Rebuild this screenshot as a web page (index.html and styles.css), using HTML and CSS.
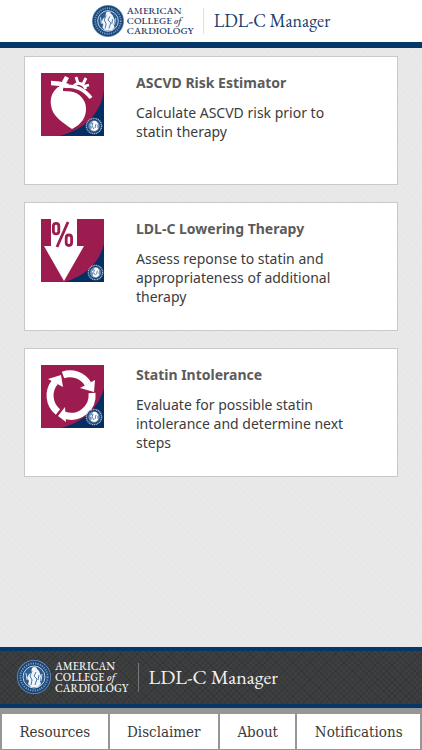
FILE: index.html
```
<!DOCTYPE html>
<html lang="en">
<head>
<meta charset="utf-8">
<meta name="viewport" content="width=device-width, initial-scale=1">
<title>LDL-C Manager</title>
<link rel="stylesheet" href="styles.css">
</head>
<body>
<svg class="defs" aria-hidden="true">
  <symbol id="seal" viewBox="0 0 34 34">
    <circle cx="17" cy="17" r="17" fill="#6f93ba"/>
    <circle cx="17" cy="17" r="16.2" fill="#164579"/>
    <circle cx="17" cy="17" r="13.6" fill="none" stroke="#7798bb" stroke-width="2" stroke-dasharray="1.3 1.1"/>
    <circle cx="17" cy="17" r="11" fill="#2d5c92" stroke="#d8e4f0" stroke-width=".9"/>
    <path d="M15 8c2-2 5-1 5 1l2 2 2 5-1 5 1 3-3 3h-7l-3-3 1-3-2-3 2-4 2-1z" fill="#eef4f9"/>
    <path d="M15 11l-2 5 2 4-1 5M19 12l-2 4 3 3-2 6M22 15l-1 5" fill="none" stroke="#4a76a8" stroke-width="1"/>
    <path d="M9 13l1 7M25 14l-1 7" stroke="#d0dfed" stroke-width="1"/>
  </symbol>
  <symbol id="badge" viewBox="0 0 18 18">
    <circle cx="9" cy="9" r="7.6" fill="#173f70" stroke="#9eb5cf" stroke-width="1.4" stroke-dasharray="1.2 .6"/>
    <circle cx="9" cy="9" r="5.7" fill="#7697bb"/>
    <path d="M8 4l3 0 2 3-1 2 1 3-3 2-4-1 1-3-2-2 2-1z" fill="#fff"/>
    <path d="M8 6l-1 3 2 3M11 7l-1 4" fill="none" stroke="#567fab"/>
  </symbol>
</svg>

<header class="header">
  <div class="brand">
    <svg class="brand-seal" aria-hidden="true"><use href="#seal"/></svg>
    <div class="brand-org">AMERICAN<br>COLLEGE <i>of</i><br>CARDIOLOGY</div>
    <h1 class="brand-title">LDL-C Manager</h1>
  </div>
</header>

<main class="tools">
  <a class="card" href="#risk">
    <svg class="card-icon" viewBox="0 0 63 63" aria-hidden="true">
      <path d="M0 0h63v63H0z" fill="#9c1c50"/>
      <path d="M63 17C60 41 43 57 18 63h45z" fill="#052e62"/>
      <path d="M17 14C11 19 9 25 10 32c1 11 11 17 21 24 10-5 14-12 14-20 0-7-3-11-8-15L26 14z" fill="#fff"/>
      <path d="M22 15c12 0 20 3 26 12" fill="none" stroke="#9c1c50" stroke-width="6"/>
      <g fill="none" stroke="#fff">
        <path d="M10 10c6 0 11 1 17 3M26 4l-6 11" stroke-width="4.5"/>
        <path d="M23 13c13 0 20 3 27 12" stroke-width="3.6"/>
        <path d="M32 14c4-5 9-5 13 2M37 10l-2-6M42 11l3-6M44 13l4-1" stroke-width="2.8"/>
      </g>
      <use href="#badge" x="44" y="44" width="18" height="18"/>
    </svg>
    <div class="card-text">
      <h2>ASCVD Risk Estimator</h2>
      <p>Calculate ASCVD risk prior to statin therapy</p>
    </div>
  </a>
  <a class="card" href="#therapy">
    <svg class="card-icon" viewBox="0 0 63 63" aria-hidden="true">
      <path d="M0 0h63v63H0z" fill="#9c1c50"/>
      <path d="M63 24C59 43 46 56 24 63h39z" fill="#052e62"/>
      <path d="M10 0h26v27h7L23 62 3 27h7z" fill="#fff"/>
      <g fill="none" stroke="#9c1c50" stroke-width="2.8">
        <rect x="12.4" y="4.4" width="5.4" height="10.5" rx="2.7"/>
        <rect x="25.2" y="16" width="5.4" height="10.5" rx="2.7"/>
        <path d="M27 3L16 28"/>
      </g>
      <use href="#badge" x="46" y="45" width="17" height="17"/>
    </svg>
    <div class="card-text">
      <h2>LDL-C Lowering Therapy</h2>
      <p>Assess reponse to statin and appropriateness of additional therapy</p>
    </div>
  </a>
  <a class="card" href="#intolerance">
    <svg class="card-icon" viewBox="0 0 63 63" aria-hidden="true">
      <path d="M0 0h63v63H0z" fill="#9c1c50"/>
      <path d="M63 23C58 42 43 57 20 63h43z" fill="#052e62"/>
      <g fill="none" stroke="#fff" stroke-width="7">
        <path d="M22 10A21 21 0 0 1 47 19"/>
        <path d="M51 28A21 21 0 0 1 23 50"/>
        <path d="M17 47A21 21 0 0 1 14 17"/>
      </g>
      <path d="M54 15l-1 12-14-4zM17 51l7-9 1 15zM7 14l13-4 2 12z" fill="#fff"/>
      <use href="#badge" x="44" y="43" width="18" height="18"/>
    </svg>
    <div class="card-text">
      <h2>Statin Intolerance</h2>
      <p>Evaluate for possible statin intolerance and determine next steps</p>
    </div>
  </a>
</main>

<footer class="footer">
  <div class="footer-brand">
    <div class="brand brand-large">
      <svg class="brand-seal" aria-hidden="true"><use href="#seal"/></svg>
      <div class="brand-org">AMERICAN<br>COLLEGE <i>of</i><br>CARDIOLOGY</div>
      <div class="brand-title">LDL-C Manager</div>
    </div>
  </div>
  <nav class="tabs">
    <button type="button">Resources</button>
    <button type="button">Disclaimer</button>
    <button type="button">About</button>
    <button type="button">Notifications</button>
  </nav>
</footer>
</body>
</html>
```
FILE: styles.css
```
* { box-sizing: border-box; }

body {
  margin: 0;
  min-height: 100vh;
  display: flex;
  flex-direction: column;
  background: repeating-linear-gradient(45deg, #e9e9ea 0 2px, #e7e7e8 2px 4px);
  color: #3c3c3c;
  font-family: "Noto Sans", "Open Sans", sans-serif;
}

.defs { display: none; }

.header {
  display: flex;
  justify-content: center;
  padding: 5px 0;
  background: #fff;
  border-bottom: 6px solid #053769;
  color: #1b406c;
}

.brand {
  display: flex;
  align-items: center;
  font-family: "EB Garamond", "Liberation Serif", serif;
}
.brand-seal { width: 32px; height: 32px; margin-right: 3px; }
.brand-org { font-size: 10px; line-height: 10px; font-weight: 500; }
.brand-title {
  margin: 0 0 0 9px;
  padding-left: 10px;
  border-left: 1px solid #dde1e6;
  font-size: 18px;
  line-height: 26px;
  font-weight: 400;
}

.brand-large .brand-seal { width: 34px; height: 34px; margin-right: 4px; }
.brand-large .brand-org { font-size: 11px; line-height: 11px; }
.brand-large .brand-title {
  border-color: #77787a;
  font-size: 20px;
  line-height: 29px;
}

.tools {
  flex: 1;
  display: flex;
  flex-direction: column;
  gap: 17px;
  padding: 8px 24px 16px;
}
.card {
  display: flex;
  align-items: flex-start;
  gap: 32px;
  min-height: 129px;
  padding: 16px;
  background: #fff;
  border: 1px solid #c9c9ca;
  color: inherit;
  text-decoration: none;
}
.card-icon { flex: none; width: 63px; height: 63px; }
.card-text { flex: 1; padding-right: 28px; }
.card h2 {
  margin: 0 0 10px;
  font-size: 14px;
  line-height: 20px;
  font-weight: 700;
  color: #5b5b5b;
}
.card p { margin: 0; font-size: 14px; line-height: 19px; }

.footer-brand {
  padding: 9px 17px 10px;
  border-top: 4px solid #053769;
  border-bottom: 4px solid #053769;
  background:
    repeating-linear-gradient(45deg, rgba(20, 20, 20, .16) 0 1px, transparent 1px 4px),
    repeating-linear-gradient(-45deg, rgba(20, 20, 20, .16) 0 1px, transparent 1px 4px),
    #3e3f40;
  color: #f1f1f1;
}

.tabs {
  display: flex;
  gap: 2px;
  padding: 6px 2px 1px;
  background: #969696;
}
.tabs button {
  flex: 1 1 auto;
  height: 35px;
  padding: 0;
  border: 0;
  background: #fff;
  color: #3a3a3a;
  font-family: "Roboto Slab", "DejaVu Serif Condensed", "DejaVu Serif", serif;
  font-size: 15px;
  line-height: 20px;
}
```
